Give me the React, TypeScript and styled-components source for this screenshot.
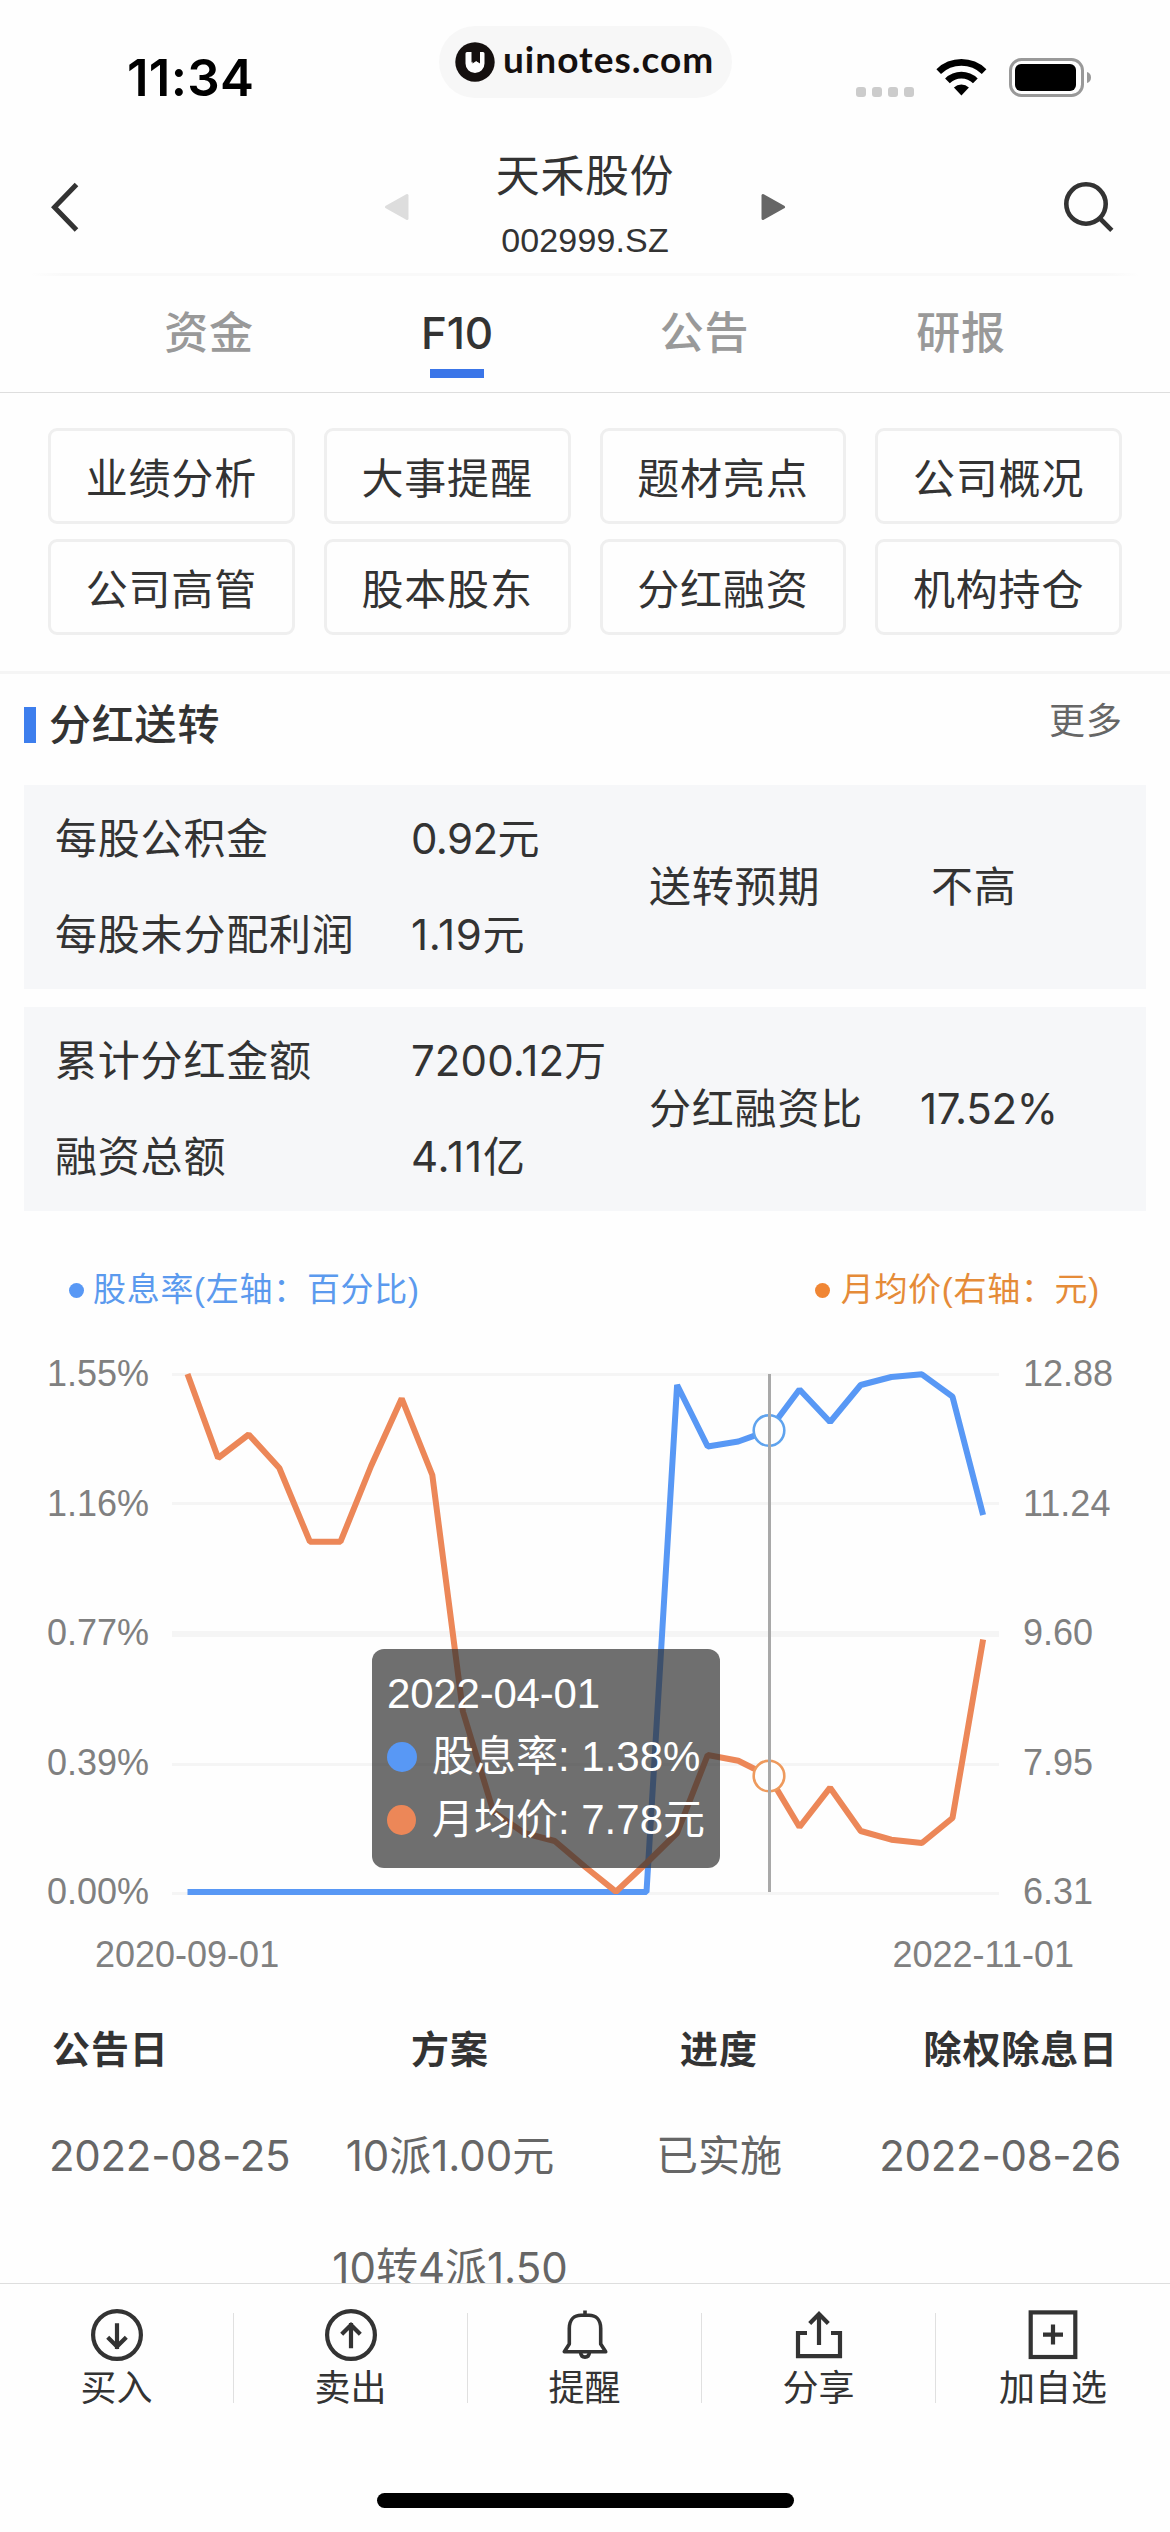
import React from "react";
import styled, { createGlobalStyle, css } from "styled-components";

const ui = `Inter, "Noto Sans CJK SC", sans-serif`;
const chartFont = `"Liberation Sans", "Noto Sans CJK SC", sans-serif`;
const ink = "#333";
const blue = "#5898f5";
const orange = "#ec8758";
const paper = "#fefefe";

const Global = createGlobalStyle`
  * { box-sizing: border-box; }
  body { margin: 0; background: ${paper}; }
`;

const Screen = styled.div`
  width: 1170px;
  height: 2532px;
  display: flex;
  flex-direction: column;
  overflow: hidden;
  background: ${paper};
  color: ${ink};
  font-family: ${ui};
  white-space: nowrap;
`;

const StatusBar = styled.div`
  flex: none;
  height: 124px;
  display: grid;
  grid-template-columns: 439px 293px 1fr;
  align-items: start;
`;

const Clock = styled.div`
  padding: 48px 0 0 127px;
  font-size: 51px;
  line-height: 60px;
  font-weight: 600;
  letter-spacing: 0.3px;
  color: #000;
`;

const Brand = styled.div`
  display: flex;
  align-items: center;
  gap: 8px;
  height: 72px;
  margin-top: 26px;
  padding: 0 0 0 16px;
  border-radius: 36px;
  background: #f7f7f7;
  color: #15100f;
  font-family: Lato, sans-serif;
  font-weight: 700;
  font-size: 37px;
  line-height: 66px;
  letter-spacing: 1px;

  span { margin-top: -6px; }
`;

const StatusIcons = styled.div`
  display: flex;
  align-items: flex-end;
  padding: 58px 0 0 124px;
`;

const SignalDots = styled.div`
  display: flex;
  gap: 6px;
  margin: 0 22px 1px 0;

  i { width: 10px; height: 10px; border-radius: 3px; background: #ccc; }
`;

const Header = styled.header`
  flex: none;
  display: grid;
  grid-template-columns: 384px 402px 1fr;
  height: 149px;
  align-items: center;
`;

const StockNav = styled.div`
  display: flex;
  align-items: center;
  justify-content: space-between;
  height: 100%;
  padding-top: 17px;
`;

const StockName = styled.div`
  display: flex;
  flex-direction: column;
  align-items: center;
  margin-top: -5px;
`;

const Name = styled.div`
  font-size: 44px;
  line-height: 62px;
  letter-spacing: 0.6px;
`;

const Code = styled.div`
  margin-top: 9px;
  font-family: ${chartFont};
  font-size: 34px;
  line-height: 48px;
  letter-spacing: 0.15px;
`;

const HeaderRule = styled.div`
  flex: none;
  height: 3px;
  margin: 0 30px;
  background: linear-gradient(90deg, ${paper}, #f9f9f9 3%, #f9f9f9 97%, ${paper});
`;

const Tabs = styled.nav`
  flex: none;
  height: 117px;
  display: grid;
  grid-template-columns: 248px 248px 247px 266px;
  padding-left: 85px;
  border-bottom: 1px solid #dedede;
`;

const Tab = styled.div<{ $active?: boolean }>`
  display: flex;
  flex-direction: column;
  align-items: center;
  padding-top: 26px;
  font-size: 44px;
  line-height: 62px;
  font-weight: 500;
  letter-spacing: ${(p) => (p.$active ? "-0.2px" : "0.8px")};
  color: ${(p) => (p.$active ? ink : "#999")};

  ${(p) =>
    p.$active &&
    css`
      &::after {
        content: "";
        width: 54px;
        height: 9px;
        margin-top: 5px;
        background: #3a75e8;
      }
    `}
`;

const Shortcuts = styled.section`
  flex: none;
  display: grid;
  grid-template-columns: repeat(4, 1fr);
  grid-auto-rows: 96px;
  gap: 15px 29px;
  height: 281px;
  padding: 35px 48px 0;
  border-bottom: 3px solid #f5f5f5;
`;

const Shortcut = styled.button`
  padding: 6px 0 0;
  border: 3px solid #efefef;
  border-radius: 9px;
  background: none;
  color: inherit;
  font: 42px/60px ${ui};
  letter-spacing: 0.8px;
  text-align: center;
`;

const SectionHead = styled.div`
  flex: none;
  display: flex;
  justify-content: space-between;
  align-items: flex-start;
  height: 111px;
  padding: 21px 47px 0 24px;
`;

const SectionTitle = styled.h2`
  display: flex;
  align-items: center;
  gap: 13px;
  margin: 0;
  font-size: 42px;
  line-height: 60px;
  font-weight: 500;
  letter-spacing: 0.8px;

  &::before {
    content: "";
    width: 12px;
    height: 36px;
    background: #3d7eed;
  }
`;

const More = styled.a`
  font-size: 36px;
  line-height: 52px;
  letter-spacing: 1px;
  color: #666;
`;

const Card = styled.section`
  flex: none;
  display: grid;
  grid-template-columns: 356px 238px 271px 1fr;
  grid-template-rows: 96px 96px;
  align-items: center;
  height: 204px;
  margin: 0 24px 18px;
  padding: 6px 0 6px 31px;
  background: #f6f7f9;
  font-size: 42px;
  line-height: 60px;
`;

const Cell = styled.div<{ $col: number; $row?: string; $indent?: number; $tracking?: number }>`
  grid-column: ${(p) => p.$col};
  grid-row: ${(p) => p.$row ?? "1 / span 2"};
  padding-left: ${(p) => p.$indent ?? 0}px;
  letter-spacing: ${(p) => p.$tracking ?? 0.8}px;
`;

const Legend = styled.div`
  flex: none;
  display: flex;
  justify-content: space-between;
  height: 125px;
  padding: 37px 70px 0 69px;
  font-family: ${chartFont};
  font-size: 33px;
  line-height: 48px;
  letter-spacing: 0.7px;
`;

const LegendItem = styled.div<{ $dot: string; $ink: string; $gap: number }>`
  display: flex;
  align-items: center;
  gap: ${(p) => p.$gap}px;
  height: 48px;
  color: ${(p) => p.$ink};

  &::before {
    content: "";
    width: 15px;
    height: 15px;
    border-radius: 50%;
    background: ${(p) => p.$dot};
  }
`;

const Chart = styled.section`
  flex: none;
  position: relative;
  display: grid;
  grid-template-columns: 149px 23px 827px 24px 1fr;
  height: 558px;
  font-family: ${chartFont};
  color: #808080;
  font-size: 36px;
  line-height: 40px;
`;

const Axis = styled.div<{ $right?: boolean }>`
  display: flex;
  flex-direction: column;
  justify-content: space-between;
  grid-column: ${(p) => (p.$right ? 5 : 1)};
  text-align: ${(p) => (p.$right ? "left" : "right")};
`;

const Plot = styled.svg`
  grid-column: 3;
  display: block;
  overflow: visible;
`;

const Tooltip = styled.div`
  position: absolute;
  left: 372px;
  top: 295px;
  width: 348px;
  height: 219px;
  padding: 13px 15px;
  border-radius: 12px;
  background: rgba(50, 50, 50, 0.7);
  color: #fff;
  font-size: 42px;
  line-height: 63px;
`;

const TipDate = styled.div`
  letter-spacing: -0.2px;
`;

const TipRow = styled.div<{ $dot: string; $gap: number }>`
  display: flex;
  align-items: center;
  gap: ${(p) => p.$gap}px;
  white-space: pre;

  &::before {
    content: "";
    width: 30px;
    height: 30px;
    border-radius: 50%;
    background: ${(p) => p.$dot};
  }
`;

const DateAxis = styled.div`
  flex: none;
  display: flex;
  justify-content: space-between;
  height: 96px;
  padding: 23px 96px 0 95px;
  font-family: ${chartFont};
  font-size: 36px;
  line-height: 40px;
  color: #808080;
`;

const Table = styled.section`
  flex: 1;
  min-height: 0;
  overflow: hidden;
`;

const row = css`
  display: grid;
  text-align: center;

  & > :first-child { text-align: left; }
  & > :last-child { text-align: right; }
`;

const TableHead = styled.div`
  ${row}
  grid-template-columns: 268px 260px 278px 1fr;
  height: 80px;
  padding: 1px 52px 0;
  font-size: 38px;
  line-height: 80px;
  font-weight: 700;
  letter-spacing: 0.9px;
`;

const TableRow = styled.div`
  ${row}
  grid-template-columns: 271px 260px 278px 1fr;
  height: 112px;
  padding: 40px 49px 0;
  font-size: 42px;
  line-height: 56px;
  color: #666;
`;

const DateCell = styled.span`
  letter-spacing: -0.3px;
`;

const ActionBar = styled.footer`
  flex: none;
  display: grid;
  grid-template-columns: repeat(5, 234px);
  height: 210px;
  border-top: 1px solid #dedede;
`;

const Action = styled.div`
  display: flex;
  flex-direction: column;
  align-items: center;
  height: 90px;
  margin-top: 29px;
  border-right: 1px solid #e0e0e0;
  font-size: 36px;
  line-height: 50px;

  &:last-child { border-right: 0; }
  svg { flex: none; display: block; margin: -5px 0 1px; }
`;

const HomeIndicator = styled.div`
  flex: none;
  width: 417px;
  height: 15px;
  margin: 0 auto 24px 377px;
  border-radius: 8px;
  background: #000;
`;

const left = 187.5;
const step = 30.6;
const yieldY = [
  ...Array(16).fill(1892), 1385, 1446.5, 1441.5, 1430.5, 1389.5, 1422, 1385, 1377, 1374.3, 1396.7, 1515,
];
const priceY = [
  1374, 1458, 1434.5, 1468, 1541.7, 1541.7, 1466, 1398.5, 1475, 1711.5, 1812, 1833, 1841, 1867, 1891.7, 1863,
  1833, 1755, 1760.7, 1776, 1827, 1787.7, 1831, 1839.7, 1843, 1818, 1639.5,
];
const toPoints = (ys: number[]) => ys.map((y, i) => `${left + i * step},${y}`).join(" ");

function Series() {
  return (
    <Plot width="827" height="558" viewBox="172 1354 827 558">
      <g fill="#f5f5f5">
        <rect x="172" y="1373" width="827" height="3" />
        <rect x="172" y="1502" width="827" height="3" />
        <rect x="172" y="1631" width="827" height="6" />
        <rect x="172" y="1763" width="827" height="3" />
        <rect x="172" y="1892" width="827" height="3" />
      </g>
      <g fill="none" strokeWidth="6" strokeLinejoin="bevel">
        <polyline points={toPoints(yieldY)} stroke={blue} />
        <polyline points={toPoints(priceY)} stroke={orange} />
      </g>
      <g fill={paper} strokeWidth="2.6">
        <circle cx="769" cy="1430.5" r="15.3" stroke="#5fa3ee" />
        <circle cx="769" cy="1776" r="15.3" stroke="#ee9a5d" />
      </g>
      <rect x="768" y="1374" width="3" height="518" fill="#a9a9a9" />
    </Plot>
  );
}

const iconBox = { width: 54, height: 54, fill: "none", stroke: ink, strokeWidth: 4.2 };

const BuyIcon = () => (
  <svg viewBox="0 0 54 54" {...iconBox}>
    <circle cx="27" cy="27" r="23.9" />
    <path d="M27 15.3V41M17.7 29.2l9.3 9.4 9.3-9.4" />
  </svg>
);
const SellIcon = () => (
  <svg viewBox="0 0 54 54" {...iconBox}>
    <circle cx="27" cy="27" r="23.9" />
    <path d="M27 40.2V15M17.7 26.3l9.3-9.4 9.3 9.4" />
  </svg>
);
const BellIcon = () => (
  <svg viewBox="0 0 54 54" {...iconBox} strokeWidth={3.6} strokeLinejoin="round">
    <path d="M27 2.5v4M6.3 43.8 11.3 36V20.5C11.3 11.5 16.5 7.3 23 7.3h8c6.500 0 11.7 4.200 11.7 13.2V36l5 7.8z" />
    <path d="M22.6 44.5c.3 3.300 2 4.600 4.400 4.600s4.100-1.300 4.400-4.600" />
  </svg>
);
const ShareIcon = () => (
  <svg viewBox="0 0 54 54" {...iconBox}>
    <path d="M15 25H6v23.200h42V25h-9M27 37V5M17.700 15.500 27 6l9.300 9.500" />
  </svg>
);
const AddIcon = () => (
  <svg viewBox="0 0 54 54" {...iconBox}>
    <rect x="4.700" y="4.400" width="44.600" height="44.600" />
    <path d="M27 16.500v20M17 26.700h20" />
  </svg>
);

const shortcuts = ["业绩分析", "大事提醒", "题材亮点", "公司概况", "公司高管", "股本股东", "分红融资", "机构持仓"];
const actions = [
  { label: "买入", Icon: BuyIcon },
  { label: "卖出", Icon: SellIcon },
  { label: "提醒", Icon: BellIcon },
  { label: "分享", Icon: ShareIcon },
  { label: "加自选", Icon: AddIcon },
];

export default function App() {
  return (
    <Screen>
      <Global />
      <StatusBar>
        <Clock>11:34</Clock>
        <Brand>
          <svg width="40" height="40" viewBox="0 0 40 40">
            <circle cx="20" cy="20" r="19.700" fill="#15100f" />
            <path
              d="M12 10h4.500v10.500l3.500-2.500 3.500 2.500V10H28a1.500 1.500 0 0 1 1.500 1.500V21.500a9.500 9.500 0 0 1-19 0V11.500A1.500 1.500 0 0 1 12 10z"
              fill="#fff"
            />
            <path d="M17.500 9.500h7.500v12l-3.700-2.500-3.800 2.500z" fill="#15100f" />
          </svg>
          <span>uinotes.com</span>
        </Brand>
        <StatusIcons>
          <SignalDots>
            <i />
            <i />
            <i />
            <i />
          </SignalDots>
          <svg width="150" height="40" viewBox="936 58 150 40" overflow="visible">
            <g transform="translate(961.4 95.500)">
              <path d="M-25-26.300a35.500 35.500 0 0 1 50 0l-4.600 4.900a28.800 28.800 0 0 0-40.800 0z" />
              <path d="M-16.300-17.100a23.500 23.500 0 0 1 32.600 0l-4.700 4.900a16.500 16.500 0 0 0-23.200 0z" />
              <path d="M-7.500-8a11 11 0 0 1 15 0L0 0z" />
            </g>
            <rect x="1010.500" y="59.500" width="72" height="36" rx="11" fill="none" stroke="#999" strokeWidth="3" />
            <rect x="1015" y="64" width="61" height="27" rx="6" />
            <path d="M1087 72c2.700.8 4 2.800 4 5.500s-1.300 4.700-4 5.500z" fill="#999" />
          </svg>
        </StatusIcons>
      </StatusBar>

      <Header>
        <svg width="384" height="149" viewBox="0 124 384 149">
          <path d="M76.500 184.500 54.500 207.300l22 22.800" fill="none" stroke={ink} strokeWidth="5" />
        </svg>
        <StockNav>
          <svg width="25" height="28" viewBox="0 0 25 28">
            <path d="M23 2.500v23L2.500 14z" fill="#ddd" stroke="#ddd" strokeWidth="3" strokeLinejoin="round" />
          </svg>
          <StockName>
            <Name>天禾股份</Name>
            <Code>002999.SZ</Code>
          </StockName>
          <svg width="25" height="28" viewBox="0 0 25 28">
            <path d="M2 2.500v23L22.500 14z" fill="#666" stroke="#666" strokeWidth="3" strokeLinejoin="round" />
          </svg>
        </StockNav>
        <svg width="384" height="149" viewBox="786 124 384 149">
          <g fill="none" stroke={ink} strokeWidth="4.600">
            <circle cx="1086" cy="204" r="19.700" />
            <path d="m1099.500 218 12.300 12.300" />
          </g>
        </svg>
      </Header>
      <HeaderRule />

      <Tabs>
        <Tab>资金</Tab>
        <Tab $active>F10</Tab>
        <Tab>公告</Tab>
        <Tab>研报</Tab>
      </Tabs>

      <Shortcuts>
        {shortcuts.map((s) => (
          <Shortcut key={s}>{s}</Shortcut>
        ))}
      </Shortcuts>

      <SectionHead>
        <SectionTitle>分红送转</SectionTitle>
        <More>更多</More>
      </SectionHead>

      <Card>
        <Cell $col={1} $row="1">每股公积金</Cell>
        <Cell $col={2} $row="1" $tracking={-0.6}>0.92元</Cell>
        <Cell $col={1} $row="2">每股未分配利润</Cell>
        <Cell $col={2} $row="2" $tracking={0.7}>1.19元</Cell>
        <Cell $col={3}>送转预期</Cell>
        <Cell $col={4} $indent={11}>不高</Cell>
      </Card>
      <Card>
        <Cell $col={1} $row="1">累计分红金额</Cell>
        <Cell $col={2} $row="1" $tracking={0.1}>7200.12万</Cell>
        <Cell $col={1} $row="2">融资总额</Cell>
        <Cell $col={2} $row="2" $tracking={0.9}>4.11亿</Cell>
        <Cell $col={3}>分红融资比</Cell>
        <Cell $col={4} $tracking={-0.3}>17.52%</Cell>
      </Card>

      <Legend>
        <LegendItem $dot={blue} $ink="#5b9aee" $gap={9}>股息率(左轴：百分比)</LegendItem>
        <LegendItem $dot="#f08634" $ink="#e58b38" $gap={11}>月均价(右轴：元)</LegendItem>
      </Legend>

      <Chart>
        <Axis>
          {["1.55%", "1.16%", "0.77%", "0.39%", "0.00%"].map((t) => (
            <span key={t}>{t}</span>
          ))}
        </Axis>
        <Series />
        <Axis $right>
          {["12.88", "11.24", "9.60", "7.95", "6.31"].map((t) => (
            <span key={t}>{t}</span>
          ))}
        </Axis>
        <Tooltip>
          <TipDate>2022-04-01</TipDate>
          <TipRow $dot={blue} $gap={15}>股息率: 1.38%</TipRow>
          <TipRow $dot={orange} $gap={16}>月均价: 7.78元</TipRow>
        </Tooltip>
      </Chart>
      <DateAxis>
        <span>2020-09-01</span>
        <span>2022-11-01</span>
      </DateAxis>

      <Table>
        <TableHead>
          <span>公告日</span>
          <span>方案</span>
          <span>进度</span>
          <span>除权除息日</span>
        </TableHead>
        <TableRow>
          <DateCell>2022-08-25</DateCell>
          <span>10派1.00元</span>
          <span>已实施</span>
          <DateCell>2022-08-26</DateCell>
        </TableRow>
        <TableRow>
          <span />
          <span>10转4派1.50</span>
          <span />
          <span />
        </TableRow>
      </Table>

      <ActionBar>
        {actions.map(({ label, Icon }) => (
          <Action key={label}>
            <Icon />
            {label}
          </Action>
        ))}
      </ActionBar>
      <HomeIndicator />
    </Screen>
  );
}
